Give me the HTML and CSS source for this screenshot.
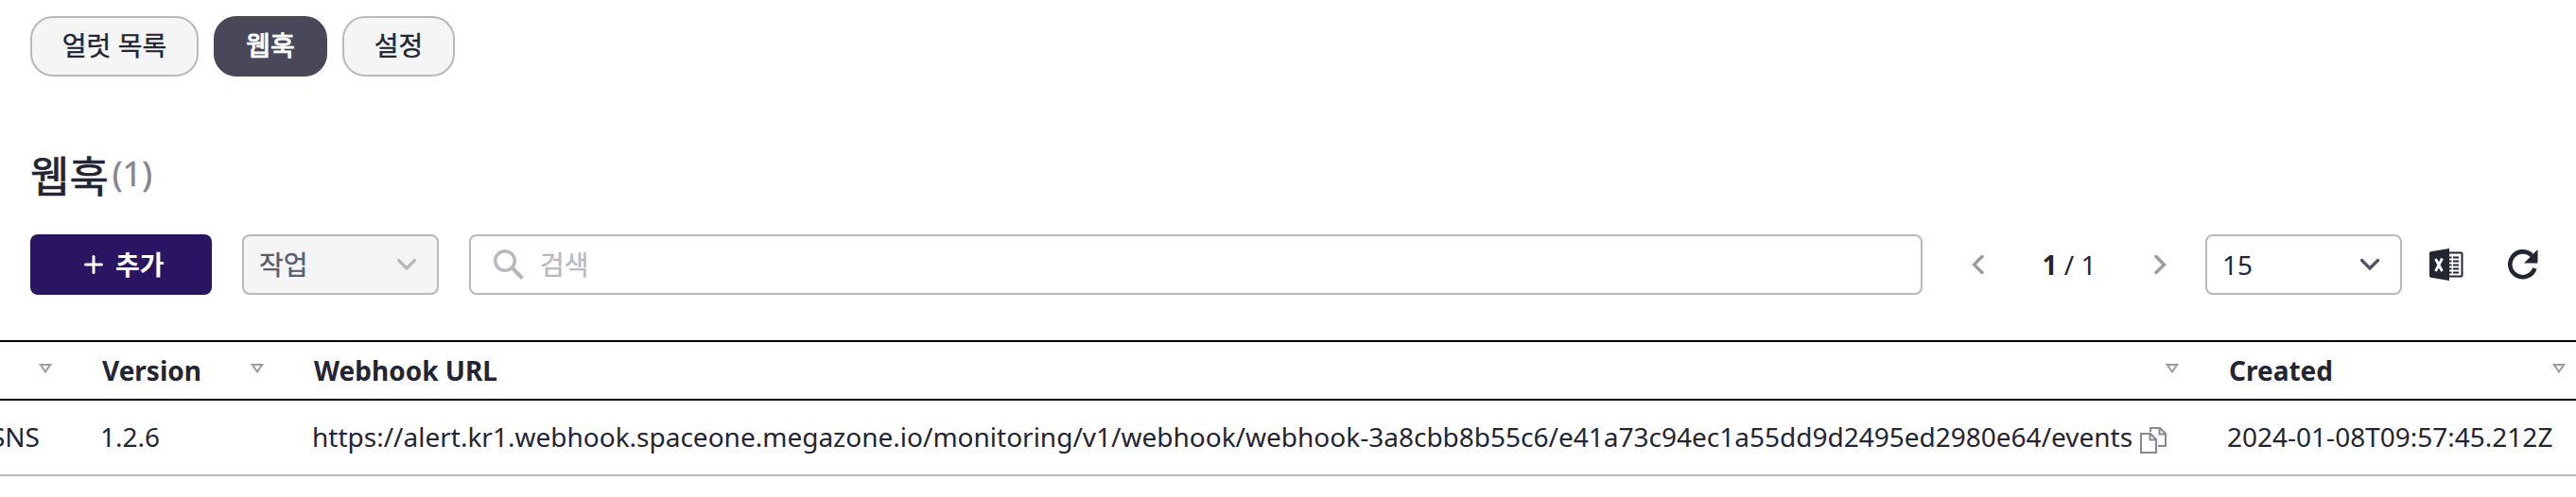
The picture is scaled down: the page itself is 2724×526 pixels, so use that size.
FILE: index.html
```
<!DOCTYPE html>
<html lang="ko">
<head>
<meta charset="utf-8">
<title>웹훅</title>
<link rel="stylesheet" href="styles.css">
</head>
<body>
<nav class="tabs">
  <button class="tab tab-wide">얼럿 목록</button>
  <button class="tab tab-active">웹훅</button>
  <button class="tab tab-last">설정</button>
</nav>
<header class="heading">
  <h1 class="title">웹훅</h1><span class="count">(1)</span>
</header>
<section class="toolbar">
  <button class="add">
    <svg width="20" height="20" viewBox="0 0 20 20"><path d="M10 1.5v17M1.5 10h17" stroke="#fff" stroke-width="3" stroke-linecap="round"/></svg>
    <span>추가</span>
  </button>
  <div class="select action">
    <span>작업</span>
    <svg width="20" height="12" viewBox="0 0 20 12" fill="none"><path d="M1.5 1.5l8.500 8.500 8.500-8.500" stroke="#b9b8bf" stroke-width="3.400" stroke-linecap="round"/></svg>
  </div>
  <div class="search">
    <svg width="32" height="32" viewBox="0 0 32 32" fill="none" stroke="#b9b8bf"><circle cx="12" cy="12" r="10.300" stroke-width="3.400"/><path d="M19.500 19.500L30.500 30.500" stroke-width="4.200"/></svg>
    <span>검색</span>
  </div>
  <div class="pager">
    <svg width="13" height="20" viewBox="0 0 13 20" fill="none"><path d="M11 1.500L2.500 10l8.500 8.500" stroke="#9b9ba8" stroke-width="3.400" stroke-linecap="round"/></svg>
    <span class="pages"><b>1</b> / 1</span>
    <svg width="13" height="20" viewBox="0 0 13 20" fill="none"><path d="M2 1.500l8.500 8.500L2 18.500" stroke="#9b9ba8" stroke-width="3.400" stroke-linecap="round"/></svg>
  </div>
  <div class="select size">
    <span>15</span>
    <svg width="20" height="12" viewBox="0 0 20 12" fill="none"><path d="M1.500 1.500l8.500 8.500 8.500-8.500" stroke="#545465" stroke-width="3.400" stroke-linecap="round"/></svg>
  </div>
  <svg class="excel" width="36" height="34" viewBox="0 0 36 34">
    <path d="M20 4.500h13.500q1 0 1 1v23q0 1-1 1H20" fill="#fff" stroke="#232533" stroke-width="2"/>
    <path d="M0 5Q0 3.500 1.500 3.200L21 0v34L1.500 30.800Q0 30.500 0 29z" fill="#232533"/>
    <path d="M20 9.500h3.500M25 9.500h6M20 13.500h3.500M25 13.500h6M20 17.500h3.500M25 17.500h6M20 21.500h3.500M25 21.500h6M20 25.500h3.500M25 25.500h6" stroke="#232533" stroke-width="2.200"/>
    <path d="M6.500 11l7 13M13.500 10.500L6.500 24" stroke="#fff" stroke-width="2.800"/>
  </svg>
  <svg class="refresh" width="32" height="32" viewBox="0 0 32 32">
    <path d="M25.200 6.300A13.400 13.400 0 1 0 28.400 20" fill="none" stroke="#232533" stroke-width="4.600"/>
    <path d="M31.500 0v14.500H17z" fill="#232533"/>
  </svg>
</section>
<section class="table">
  <div class="row head">
    <div class="cell first"><span></span><svg class="sort" width="14" height="10" viewBox="0 0 14 10"><path d="M1.800 1h10.400L7 8.500z"/></svg></div>
    <div class="cell"><span>Version</span><svg class="sort" width="14" height="10" viewBox="0 0 14 10"><path d="M1.800 1h10.400L7 8.500z"/></svg></div>
    <div class="cell"><span>Webhook URL</span><svg class="sort" width="14" height="10" viewBox="0 0 14 10"><path d="M1.800 1h10.400L7 8.500z"/></svg></div>
    <div class="cell"><span>Created</span><svg class="sort" width="14" height="10" viewBox="0 0 14 10"><path d="M1.800 1h10.400L7 8.500z"/></svg></div>
  </div>
  <div class="row body">
    <div class="cell first"><span>SNS</span></div>
    <div class="cell"><span>1.2.6</span></div>
    <div class="cell"><span>https://alert.kr1.webhook.spaceone.megazone.io/monitoring/v1/webhook/webhook-3a8cbb8b55c6/e41a73c94ec1a55dd9d2495ed2980e64/events</span><svg class="copy" width="28" height="28" viewBox="0 0 28 28" fill="none" stroke="#898995" stroke-width="2"><path d="M11 5V1h10l6 6v13h-8M20.500 1v6.500H27"/><path d="M1 7h10l6 6v14H1zM10.500 7v6.500H17"/></svg></div>
    <div class="cell"><span>2024-01-08T09:57:45.212Z</span></div>
  </div>
</section>
</body>
</html>
```

FILE: styles.css
```
* { box-sizing: border-box; }
body {
  margin: 0;
  height: 526px;
  overflow: hidden;
  background: #fff;
  color: #232533;
  font: 28px/40px "Noto Sans", "Noto Sans CJK KR", sans-serif;
}
svg { display: block; flex: none; }
button { font: inherit; color: inherit; margin: 0; padding: 0; }
.tabs { display: flex; gap: 16px; padding: 17px 32px 0; }
.tab {
  width: 120px;
  height: 64px;
  border: 2px solid #b9b8bf;
  border-radius: 24px;
  background: #f5f5f6;
  padding-bottom: 2px;
  -webkit-text-stroke: 0.4px currentColor;
}
.tab-wide { width: 178px; }
.tab-last { width: 119px; }
.tab-active { background: #484858; border-color: #484858; color: #fff; -webkit-text-stroke-width: 1px; }
.heading { display: flex; align-items: flex-start; height: 110px; margin-top: 57px; padding: 21px 32px 0; }
.title { margin: 0; font-size: 45px; line-height: 56px; font-weight: 400; -webkit-text-stroke: 0.7px currentColor; }
.count { margin-left: 4px; font-size: 36px; line-height: 50px; color: #858591; -webkit-text-stroke: 0.4px currentColor; }
.toolbar { display: flex; align-items: center; height: 64px; padding: 0 32px; }
.add {
  display: flex;
  align-items: center;
  gap: 13px;
  width: 192px;
  height: 64px;
  padding: 0 0 0 57px;
  border: 0;
  border-radius: 8px;
  background: #2a1563;
  color: #fff;
  font-weight: 700;
}
.select {
  display: flex;
  align-items: center;
  justify-content: space-between;
  width: 208px;
  height: 64px;
  padding: 0 22px 0 16px;
  border: 2px solid #b9b8bf;
  border-radius: 8px;
}
.action { margin-left: 32px; background: #f5f5f6; color: #5c5c6c; -webkit-text-stroke: 0.4px currentColor; }
.search {
  display: flex;
  align-items: center;
  gap: 17px;
  width: 1537px;
  height: 64px;
  margin-left: 32px;
  padding-left: 24px;
  border: 2px solid #b9b8bf;
  border-radius: 8px;
  color: #b9b8bf;
  -webkit-text-stroke: 0.4px currentColor;
}
.pager { display: flex; align-items: center; justify-content: space-between; width: 206px; margin-left: 52px; }
.size { margin-left: 41px; }
.excel { margin-left: 29px; }
.refresh { margin-left: 47px; }
.table { margin-top: 48px; }
.row { display: grid; grid-template-columns: 76px 224px 2025px 409px; width: 2734px; }
.cell { display: flex; align-items: center; padding-left: 30px; white-space: nowrap; }
.head { height: 64px; border-top: 2px solid #000; border-bottom: 2px solid #000; font-weight: 700; }
.head .cell { justify-content: space-between; padding: 0 21px 0 32px; }
.sort { margin-bottom: 4px; fill: none; stroke: #9b9ba8; stroke-width: 2; }
.body { height: 80px; border-bottom: 2px solid #b9b8bf; }
.body span { margin-top: -2px; }
.body .first { justify-content: flex-end; padding: 0 34px 0 0; }
.copy { margin-left: 8px; margin-top: 5px; }
```
